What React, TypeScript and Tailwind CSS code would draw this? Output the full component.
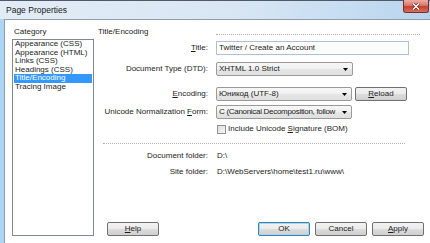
import React from 'react';

const CATEGORIES = [
  'Appearance (CSS)',
  'Appearance (HTML)',
  'Links (CSS)',
  'Headings (CSS)',
  'Title/Encoding',
  'Tracing Image',
];

const BTN =
  'h-[14px] w-[52px] shrink-0 flex items-center justify-center rounded-[2px] border border-[#707070] bg-[linear-gradient(#f2f2f2_0%,#ebebeb_50%,#dddddd_50%,#cfcfcf_100%)]';

function Arrow() {
  return (
    <svg width="5" height="3" viewBox="0 0 5 3" className="shrink-0">
      <polygon points="0,0 5,0 2.5,3" fill="#000" />
    </svg>
  );
}

function Select({ value, className, textClass = '' }: { value: string; className: string; textClass?: string }) {
  return (
    <div
      className={`h-[14px] flex items-center rounded-[2px] border border-[#9a9a9a] bg-[linear-gradient(#f7f7f7_0%,#f0f0f0_50%,#e6e6e6_50%,#e0e0e0_100%)] pl-[2px] pr-[4px] ${className}`}
    >
      <span className={`flex-1 whitespace-nowrap ${textClass}`}>{value}</span>
      <Arrow />
    </div>
  );
}

function Row({ label, children, className }: { label: React.ReactNode; children: React.ReactNode; className: string }) {
  return (
    <div className={`flex items-center ${className}`}>
      <div className="w-[110px] shrink-0 text-right whitespace-nowrap">{label}</div>
      <div className="ml-[8px] flex items-center">{children}</div>
    </div>
  );
}

export default function App() {
  return (
    <div className="w-[430px] h-[243px] overflow-hidden bg-white flex flex-col font-['Liberation_Sans',Arial,sans-serif] text-[8px] leading-[10px] text-[#1c1c1c]">
      {/* title bar */}
      <div className="h-[19px] shrink-0 border-t border-[#4f5a66] flex items-start justify-between bg-[linear-gradient(90deg,#e2ecf6_0%,#d8e6f4_55%,#c3dbf1_85%,#b7d4ef_100%)]">
        <div className="pl-[6px] pt-[4px] text-[8.5px] text-[#1a1a1a]">Page Properties</div>
        <div className="mr-[1px] -mt-px w-[26px] h-[13px] flex items-center justify-center rounded-b-[3px] border border-t-0 border-[#7a2e26] bg-[linear-gradient(#eab0a6_0%,#d9786a_45%,#c8402f_55%,#d9705c_100%)]">
          <svg width="8" height="7" viewBox="0 0 8 7">
            <path d="M1 0.5 L7 6.5 M7 0.5 L1 6.5" stroke="#5a1a14" strokeWidth="2.6" />
            <path d="M1 0.5 L7 6.5 M7 0.5 L1 6.5" stroke="#fff" strokeWidth="1.5" />
          </svg>
        </div>
      </div>

      <div className="flex-1 flex">
        <div className="w-[4px] shrink-0 bg-[#acd4f4]" />
        <div className="flex-1 flex border-l border-t border-[#8f9caa] pl-[7px] pt-[7px] pb-[7px]">
          {/* category column */}
          <div className="w-[82px] shrink-0 flex flex-col">
            <div className="h-[10px] pl-[2px]">Category</div>
            <div className="mt-[2px] flex-1 border border-[#828790] bg-white px-px">
              {CATEGORIES.map(c => (
                <div
                  key={c}
                  className={
                    c === 'Title/Encoding'
                      ? 'h-[8.5px] leading-[8.5px] pl-px whitespace-nowrap bg-[#3399ff] text-white'
                      : 'h-[8.5px] leading-[8.5px] pl-px whitespace-nowrap'
                  }
                >
                  {c}
                </div>
              ))}
            </div>
          </div>

          {/* settings column */}
          <div className="ml-[4px] flex-1 flex flex-col">
            <div className="h-[10px] flex items-start">
              <div className="w-[118px] shrink-0">Title/Encoding</div>
              <div className="mt-[7px] mr-[10px] flex-1 border-t border-dotted border-[#b0b0b0]" />
            </div>

            <Row className="mt-[4px] h-[14px]" label={<><span className="underline">T</span>itle:</>}>
              <div className="h-[14px] w-[193px] flex items-center border border-[#a9c0d8] bg-white pl-[2px]">
                Twitter / Create an Account
              </div>
            </Row>

            <Row className="mt-[7px] h-[14px]" label="Document Type (DTD):">
              <Select value="XHTML 1.0 Strict" className="w-[137px]" />
            </Row>

            <Row className="mt-[11px] h-[14px]" label={<><span className="underline">E</span>ncoding:</>}>
              <Select value="Юникод (UTF-8)" className="w-[136px]" />
              <div className={`${BTN} ml-[3px]`}>
                <span><span className="underline">R</span>eload</span>
              </div>
            </Row>

            <Row className="mt-[4px] h-[14px]" label={<>Unicode Normalization <span className="underline">F</span>orm:</>}>
              <Select
                value="C (Canonical Decomposition, follow"
                className="w-[136px]"
                textClass="tracking-[-0.3px]"
              />
            </Row>

            <Row className="mt-[5px] h-[10px]" label="">
              <div className="ml-px w-[9px] h-[9px] border border-[#8e8f8f] bg-[linear-gradient(135deg,#dcdcdc,#f8f8f8)]" />
              <span className="ml-[2px] whitespace-nowrap">
                Include Unicode <span className="underline">S</span>ignature (BOM)
              </span>
            </Row>

            <div className="mt-[9px] ml-[5px] w-[302px] border-t border-dotted border-[#b0b0b0]" />

            <Row className="mt-[7px] h-[10px]" label="Document folder:">
              <span className="ml-px">D:\</span>
            </Row>
            <Row className="mt-[6px] h-[10px]" label="Site folder:">
              <span className="ml-px whitespace-nowrap">D:\WebServers\home\test1.ru\www\</span>
            </Row>

            <div className="mt-auto flex items-center mr-[6px]">
              <div className={`${BTN} ml-[9px]`}>
                <span><span className="underline">H</span>elp</span>
              </div>
              <div className="ml-auto flex gap-[5px]">
                <div className="h-[14px] w-[52px] flex items-center justify-center rounded-[2px] border border-[#3c7fb1] shadow-[inset_0_0_0_1px_#a6d6f2] bg-[linear-gradient(#f2f2f2_0%,#ebebeb_50%,#dddddd_50%,#cfcfcf_100%)]">
                  OK
                </div>
                <div className={BTN}>Cancel</div>
                <div className={BTN}>
                  <span><span className="underline">A</span>pply</span>
                </div>
              </div>
            </div>
          </div>
        </div>
      </div>
    </div>
  );
}
